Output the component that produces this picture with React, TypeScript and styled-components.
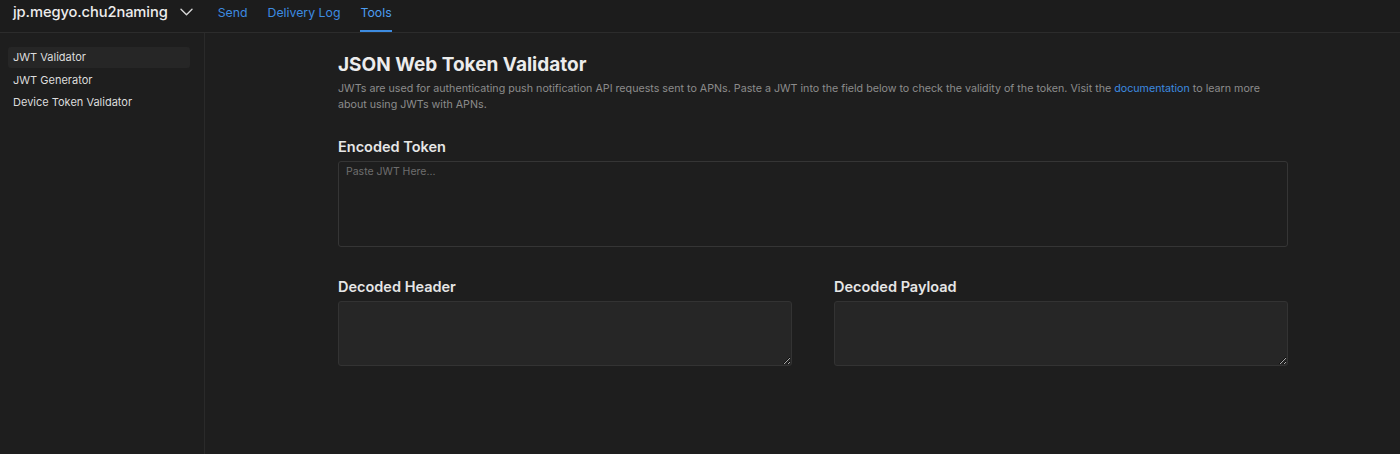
import React from "react";
import styled, { createGlobalStyle } from "styled-components";

const GlobalStyle = createGlobalStyle`
  html, body {
    margin: 0;
    padding: 0;
    background: #1e1e1e;
    font-family: Inter, "Noto Sans", sans-serif;
    -webkit-font-smoothing: antialiased;
  }
  * { box-sizing: border-box; }
`;

const Page = styled.div`
  display: flex;
  flex-direction: column;
  width: 1400px;
  height: 454px;
  background: #1e1e1e;
  color: #e6e6e6;
  overflow: hidden;
`;

const TopBar = styled.div`
  display: flex;
  align-items: stretch;
  height: 33px;
  padding-left: 13px;
  background: #1c1c1c;
  border-bottom: 1px solid #2c2c2c;
`;

const AppPicker = styled.div`
  display: flex;
  align-items: center;
  gap: 12px;
  margin-right: 25px;
  font-size: 14.7px;
  font-weight: 500;
  color: #ececec;
  letter-spacing: -0.1px;
  padding-bottom: 8px;
`;

const NavTab = styled.div<{ $active?: boolean }>`
  display: flex;
  align-items: center;
  padding-bottom: 8px;
  margin-right: 20px;
  font-size: 12.3px;
  color: ${(p) => (p.$active ? "#4c9df0" : "#3d8be0")};
  position: relative;
  &::after {
    content: "";
    display: ${(p) => (p.$active ? "block" : "none")};
    position: absolute;
    left: 0;
    right: 0;
    bottom: 0;
    height: 2px;
    background: #3d8be0;
  }
`;

const Body = styled.div`
  display: flex;
  flex: 1;
`;

const Sidebar = styled.div`
  width: 205px;
  padding: 14px 14px 0 8px;
  border-right: 1px solid #2a2a2a;
  display: flex;
  flex-direction: column;
  gap: 2px;
`;

const SideItem = styled.div<{ $active?: boolean }>`
  height: 20.5px;
  display: flex;
  align-items: center;
  padding-left: 5px;
  border-radius: 3px;
  font-size: 11px;
  color: #dcdcdc;
  background: ${(p) => (p.$active ? "#262626" : "transparent")};
`;

const Main = styled.div`
  flex: 1;
  padding: 20px 0 0 133px;
`;

const Content = styled.div`
  width: 950px;
  display: flex;
  flex-direction: column;
`;

const Title = styled.h1`
  margin: 0;
  font-size: 19px;
  font-weight: 700;
  color: #ececec;
  line-height: 24px;
`;

const Lead = styled.p`
  margin: 4px 0 0;
  max-width: 930px;
  font-size: 10.7px;
  line-height: 16px;
  color: #8c8c8c;
`;

const DocLink = styled.a`
  color: #3d8be0;
  text-decoration: none;
`;

const Label = styled.div<{ $gap?: number }>`
  margin-top: ${(p) => p.$gap ?? 0}px;
  font-size: 14.5px;
  font-weight: 600;
  color: #e6e6e6;
  line-height: 20px;
`;

const Field = styled.textarea<{ $filled?: boolean; $h: number }>`
  display: block;
  width: 100%;
  height: ${(p) => p.$h}px;
  margin-top: 4px;
  padding: 3px 7px;
  resize: ${(p) => (p.$filled ? "vertical" : "none")};
  background: ${(p) => (p.$filled ? "#262626" : "#1e1e1e")};
  border: 1px solid ${(p) => (p.$filled ? "#333333" : "#353535")};
  border-radius: 3px;
  color: #dcdcdc;
  font-family: Inter, "Noto Sans", sans-serif;
  font-size: 10.5px;
  outline: none;
  &::placeholder { color: #6e6e6e; }
`;

const Columns = styled.div`
  display: grid;
  grid-template-columns: 1fr 1fr;
  column-gap: 42px;
  margin-top: 30px;
`;

const Column = styled.div`
  display: flex;
  flex-direction: column;
`;

const Chevron = () => (
  <svg width="13" height="8" viewBox="0 0 13 8" fill="none">
    <path d="M1 1.2l5.5 5.5L12 1.2" stroke="#d8d8d8" strokeWidth="1.4" strokeLinecap="round" strokeLinejoin="round" />
  </svg>
);

export default function App() {
  return (
    <Page>
      <GlobalStyle />
      <TopBar>
        <AppPicker>
          jp.megyo.chu2naming
          <Chevron />
        </AppPicker>
        <NavTab>Send</NavTab>
        <NavTab>Delivery Log</NavTab>
        <NavTab $active>Tools</NavTab>
      </TopBar>
      <Body>
        <Sidebar>
          <SideItem $active>JWT Validator</SideItem>
          <SideItem>JWT Generator</SideItem>
          <SideItem>Device Token Validator</SideItem>
        </Sidebar>
        <Main>
          <Content>
            <Title>JSON Web Token Validator</Title>
            <Lead>
              JWTs are used for authenticating push notification API requests sent to APNs. Paste a JWT into the
              field below to check the validity of the token. Visit the <DocLink>documentation</DocLink> to learn more
              about using JWTs with APNs.
            </Lead>
            <Label $gap={24}>Encoded Token</Label>
            <Field $h={86} placeholder="Paste JWT Here..." />
            <Columns>
              <Column>
                <Label>Decoded Header</Label>
                <Field $filled $h={65} />
              </Column>
              <Column>
                <Label>Decoded Payload</Label>
                <Field $filled $h={65} />
              </Column>
            </Columns>
          </Content>
        </Main>
      </Body>
    </Page>
  );
}
